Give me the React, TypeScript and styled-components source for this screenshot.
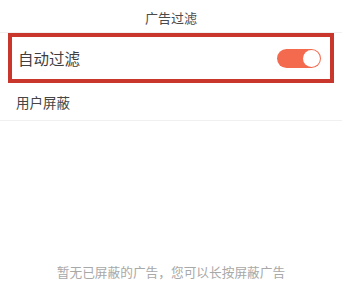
import styled, { createGlobalStyle } from "styled-components";

const Global = createGlobalStyle`
body{
    margin:0;
    background:#fff;
    font-family: "Noto Sans CJK SC", "Noto Sans", sans-serif;
}
`;
const Page = styled.div`
width: 342px;
height: 289px;
display: flex;
flex-direction: column;
background: #fff;
overflow: hidden;
`;
const Header = styled.header`
height: 33px;
box-sizing: border-box;
border-bottom: 1px solid #f0f0f0;
display: flex;
align-items: center;
justify-content: center;
font-size: 13px;
color: #4a4a4a;
padding-top: 3px;
`;
const Row = styled.div<{ $highlight?: boolean }>`
display: flex;
align-items: center;
justify-content: space-between;
box-sizing: border-box;
height: ${(p) => (p.$highlight ? "50px" : "38px")};
margin: ${(p) => (p.$highlight ? "0 8px" : "0")};
padding: ${(p) => (p.$highlight ? "0 9px 0 6px" : "0 16px")};
border: ${(p) => (p.$highlight ? "4px solid #c9372c" : "none")};
border-bottom: ${(p) => (p.$highlight ? "4px solid #c9372c" : "1px solid #f0f0f0")};
`;
const Label = styled.span<{ $big?: boolean }>`
font-size: ${(p) => (p.$big ? "15.5px" : "13.5px")};
color: ${(p) => (p.$big ? "#3f3f3f" : "#444")};
`;
const Toggle = styled.div<{ $on: boolean }>`
width: 44px;
height: 19px;
border-radius: 10px;
background: ${(p) => (p.$on ? "#f46a4e" : "#ddd")};
display: flex;
align-items: center;
justify-content: ${(p) => (p.$on ? "flex-end" : "flex-start")};
padding: 0 1px;
box-sizing: border-box;
span{
    width: 17px;
    height: 17px;
    border-radius: 50%;
    background: #fff;
}
`;
const Empty = styled.div`
flex: 1;
display: flex;
align-items: flex-end;
justify-content: center;
padding-bottom: 8px;
font-size: 12.7px;
color: #a8a8a8;
`;

function App(){
    return (
        <Page>
            <Global/>
            <Header>广告过滤</Header>
            <Row $highlight>
                <Label $big>自动过滤</Label>
                <Toggle $on={true}><span/></Toggle>
            </Row>
            <Row>
                <Label>用户屏蔽</Label>
            </Row>
            <Empty>暂无已屏蔽的广告，您可以长按屏蔽广告</Empty>
        </Page>
    );
}

export default App;
